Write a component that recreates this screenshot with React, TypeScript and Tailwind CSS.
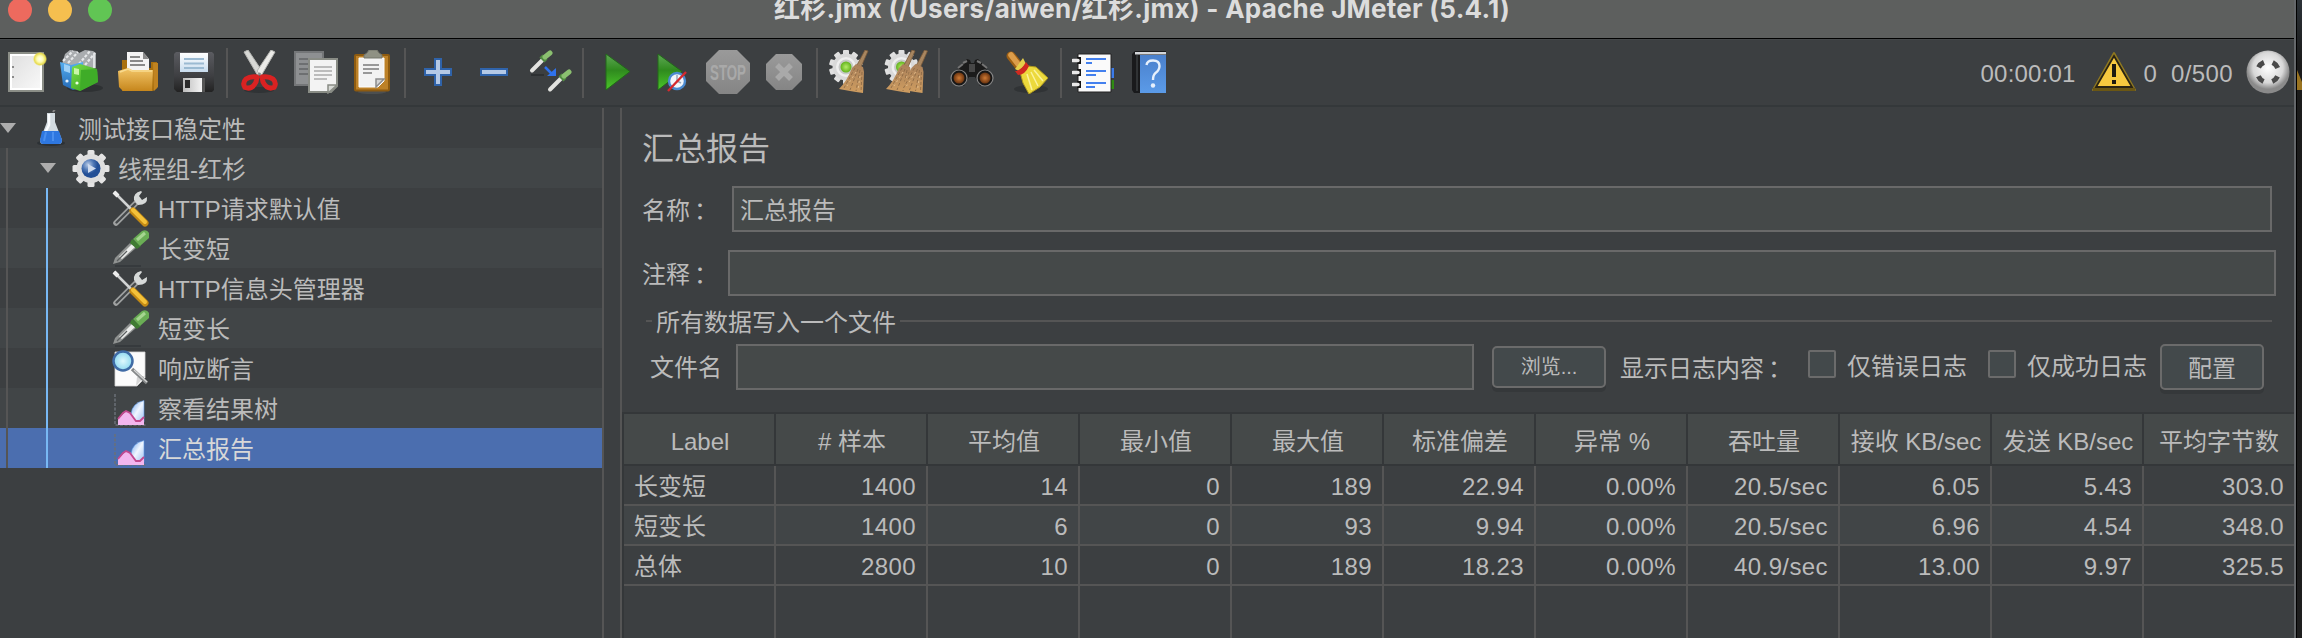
import React from 'react';

type IconProps = { children: React.ReactNode; size?: 'tool' | 'tree' };

function Icon({ children, size = 'tool' }: IconProps) {
  return size === 'tool' ? (
    <svg viewBox="0 0 44 44" className="h-11 w-11 shrink-0">{children}</svg>
  ) : (
    <svg viewBox="0 0 38 38" className="h-[38px] w-[38px] shrink-0">{children}</svg>
  );
}

function Defs() {
  return (
    <svg className="absolute h-0 w-0" aria-hidden="true">
      <defs>
        <linearGradient id="paper" x1="0" y1="0" x2="1" y2="1"><stop offset="0" stopColor="#dedede" /><stop offset="1" stopColor="#fafafa" /></linearGradient>
        <linearGradient id="blueBox" x1="0" y1="0" x2="0" y2="1"><stop offset="0" stopColor="#55aef0" /><stop offset="1" stopColor="#2569b5" /></linearGradient>
        <linearGradient id="greenBox" x1="0" y1="0" x2="1" y2="1"><stop offset="0" stopColor="#7be04a" /><stop offset="1" stopColor="#2f9a1c" /></linearGradient>
        <linearGradient id="folder" x1="0" y1="0" x2="0" y2="1"><stop offset="0" stopColor="#f3c669" /><stop offset="1" stopColor="#c6861c" /></linearGradient>
        <linearGradient id="floppy" x1="0" y1="0" x2="0" y2="1"><stop offset="0" stopColor="#5b5c61" /><stop offset="0.6" stopColor="#3e3f42" /><stop offset="1" stopColor="#222" /></linearGradient>
        <linearGradient id="label" x1="0" y1="0" x2="0" y2="1"><stop offset="0" stopColor="#ffffff" /><stop offset="1" stopColor="#c8dcee" /></linearGradient>
        <linearGradient id="metal" x1="0" y1="0" x2="1" y2="0"><stop offset="0" stopColor="#bdbdbd" /><stop offset="1" stopColor="#f3f3f3" /></linearGradient>
        <linearGradient id="play" x1="0" y1="0" x2="0" y2="1"><stop offset="0" stopColor="#5fa855" /><stop offset="0.45" stopColor="#2f8a1e" /><stop offset="1" stopColor="#4bc828" /></linearGradient>
        <linearGradient id="grey" x1="0" y1="0" x2="0" y2="1"><stop offset="0" stopColor="#9a9a9a" /><stop offset="1" stopColor="#858585" /></linearGradient>
        <linearGradient id="straw" x1="0" y1="0" x2="0" y2="1"><stop offset="0" stopColor="#a9805a" /><stop offset="1" stopColor="#cf9d60" /></linearGradient>
        <linearGradient id="book" x1="0" y1="0" x2="0" y2="1"><stop offset="0" stopColor="#4a80cc" /><stop offset="1" stopColor="#5b9be8" /></linearGradient>
        <linearGradient id="peak" x1="0" y1="0" x2="1" y2="1"><stop offset="0" stopColor="#6aa2ec" /><stop offset="0.5" stopColor="#f0f6ff" /><stop offset="1" stopColor="#9cc0f2" /></linearGradient>
        <radialGradient id="sun"><stop offset="0" stopColor="#fffff0" /><stop offset="0.45" stopColor="#fdfbb0" /><stop offset="0.8" stopColor="#e8dc50" /><stop offset="1" stopColor="#e8dc50" stopOpacity="0.15" /></radialGradient>
        <radialGradient id="lime"><stop offset="0" stopColor="#b5ec6a" /><stop offset="1" stopColor="#62b31c" /></radialGradient>
        <radialGradient id="lens"><stop offset="0" stopColor="#d07a34" /><stop offset="1" stopColor="#6a3410" /></radialGradient>
        <radialGradient id="ball" cx="0.5" cy="0.4"><stop offset="0" stopColor="#ffffff" /><stop offset="0.7" stopColor="#d8d8d8" /><stop offset="1" stopColor="#8a8a8a" /></radialGradient>
        <radialGradient id="blueBall" cx="0.35" cy="0.3"><stop offset="0" stopColor="#b9cbe6" /><stop offset="0.6" stopColor="#4d76b4" /><stop offset="1" stopColor="#234f96" /></radialGradient>
        <radialGradient id="glass"><stop offset="0" stopColor="#dff8fd" /><stop offset="1" stopColor="#8fd9f0" /></radialGradient>
      </defs>
    </svg>
  );
}

const NewDoc = () => (
  <Icon>
    <rect x="5" y="3" width="34" height="38" fill="url(#paper)" stroke="#8b8e87" strokeWidth="2" />
    <rect x="7" y="5" width="30" height="34" fill="none" stroke="#fff" strokeWidth="2" />
    <path d="M8 16h2v2h-2zM8 26h2v2h-2z" fill="#8a8a8a" />
    <circle cx="36" cy="9" r="7" fill="url(#sun)" />
  </Icon>
);

const Templates = () => (
  <Icon>
    <ellipse cx="25" cy="38" rx="18" ry="4" fill="#2e3133" />
    <path d="M2 14L5 4 10 0 17 1 19 3 25 0 33 1 36 3V18L20 22Z" fill="#a9acaf" />
    <path d="M3 11l10-10M8 13l10-11M19 14l11-13M25 15l10-12" stroke="#e6e8ea" strokeWidth="2.200" strokeDasharray="3 1.500" />
    <path d="M34 4V18" stroke="#dfe2e4" strokeWidth="2" />
    <path d="M0 12L11 15 23 12V37L13 40 3 35Z" fill="url(#blueBox)" />
    <path d="M4 14l6 2v7l-6-2z" fill="#9ed1f7" /><circle cx="7" cy="31" r="1.600" fill="#e5f3ff" />
    <path d="M12 17L20 14 37 19 38 32 20 41 11 38Z" fill="url(#greenBox)" />
    <path d="M21 20L37 19 38 32 20 41Z" fill="#3fac28" />
    <path d="M14 18l5 1v6l-5-1z" fill="#c9f5a8" /><circle cx="17" cy="33" r="1.600" fill="#eaffe0" />
  </Icon>
);

const OpenFolder = () => (
  <Icon>
    <path d="M6 10h9v8h20v-6h6v26l-4 3H6z" fill="#a9700f" />
    <path d="M37 13h5v24l-4 4z" fill="#c08321" />
    <path d="M11 2H27L33 9V23H11Z" fill="#f4f4f4" /><path d="M27 2L33 9H27Z" fill="#8b8b8b" />
    <path d="M14 7h10M14 11h13M14 15h15" stroke="#8a8a8a" strokeWidth="2" />
    <path d="M2 21L12 18 16 20H37L36 41H7L3 37Z" fill="url(#folder)" /><path d="M4 22L12 19 16 21H36" stroke="#f8db90" fill="none" strokeWidth="1.500" />
  </Icon>
);

const Save = () => (
  <Icon>
    <path d="M4 2H40L42 4V40L40 42H5L2 39V4Z" fill="url(#floppy)" />
    <rect x="8" y="3" width="28" height="19" fill="url(#label)" />
    <path d="M12 9h20M12 13.500h20M12 18h20" stroke="#9bbad2" strokeWidth="1.800" />
    <rect x="11" y="28" width="19" height="14" fill="url(#metal)" /><rect x="13" y="30" width="5" height="8" fill="#2b2b2b" /><rect x="30" y="28" width="3" height="14" fill="#555" />
  </Icon>
);

const Cut = () => (
  <Icon>
    <ellipse cx="21" cy="40" rx="15" ry="3" fill="#303335" />
    <path d="M6 2l4-2 14 21-4 5z" fill="#d7d8d5" stroke="#b3b4b1" strokeWidth="1" />
    <path d="M37 2l-4-2-14 21 4 5z" fill="#ebebe8" stroke="#b3b4b1" strokeWidth="1" />
    <path d="M19 27Q12 26 8 29Q4 33 7 37.500Q14 40 18 32ZM24 27Q31 26 35 29Q39 33 36 37.500Q29 40 25 32Z" fill="none" stroke="#d92222" strokeWidth="5" strokeLinejoin="round" />
    <circle cx="21.500" cy="24" r="1.500" fill="#888" />
  </Icon>
);

const Copy = () => (
  <Icon>
    <rect x="1" y="2" width="28" height="33" fill="#8e9092" stroke="#747678" strokeWidth="2" />
    <path d="M5 9h11M5 14h11M5 19h9M5 24h9" stroke="#6d6f71" strokeWidth="2" />
    <path d="M15 9H43V36L37 42H15Z" fill="#f3f3f3" stroke="#898c85" strokeWidth="2" />
    <path d="M20 17h18M20 21h18M20 25h18M20 29h13" stroke="#bcbcbc" strokeWidth="1.800" />
    <path d="M43 35H34V43Z" fill="#d8dad6" stroke="#898c85" strokeWidth="1.500" />
  </Icon>
);

const Paste = () => (
  <Icon>
    <ellipse cx="22" cy="42" rx="14" ry="2" fill="#4c4f50" />
    <rect x="5" y="5" width="34" height="35.500" fill="#bd8127" stroke="#8e5b10" strokeWidth="2" rx="1" />
    <path d="M9 8H34V31L28 37H9Z" fill="#f2f2f2" stroke="#fff" strokeWidth="1" />
    <path d="M13 15h16M13 19h16M13 23h9" stroke="#989898" strokeWidth="1.800" />
    <path d="M34 29H26V37Z" fill="#d5d5d5" stroke="#8c8c8c" strokeWidth="1.500" />
    <path d="M14 8V5L17 3 19 0H27L29 3 32 5V8Z" fill="#8f9184" stroke="#73756a" strokeWidth="1" />
  </Icon>
);

const Plus = () => (
  <Icon><path d="M19 9H25V19H35V25H25V35H19V25H9V19H19Z" fill="#b4c9e6" stroke="#2f63aa" strokeWidth="2" /></Icon>
);
const Minus = () => (
  <Icon><rect x="9" y="19" width="26" height="6" fill="#b4c9e6" stroke="#2f63aa" strokeWidth="2" /></Icon>
);

const Toggle = () => (
  <Icon>
    <path d="M3 25h13" stroke="#2d3032" strokeWidth="2" />
    <path d="M4 20.500L15 9.500" stroke="#e3e3e0" strokeWidth="4" strokeLinecap="round" /><path d="M14 10L17 7" stroke="#4f8a40" strokeWidth="7" /><path d="M17 7L22 3" stroke="#8bc070" strokeWidth="5" strokeLinecap="round" />
    <path d="M22 39.500L33 28.500" stroke="#e3e3e0" strokeWidth="4" strokeLinecap="round" /><path d="M33 29L36 26" stroke="#4f8a40" strokeWidth="7" /><path d="M36 26L41 22" stroke="#8bc070" strokeWidth="5" strokeLinecap="round" />
    <path d="M17 17L24 24" stroke="#2f72ec" strokeWidth="2.500" /><path d="M28 18V26H19Z" fill="#2f72ec" />
  </Icon>
);

const Play = () => (
  <Icon><path d="M12 4L36 21.500 12 40Z" fill="url(#play)" stroke="#22681a" strokeWidth="1" /></Icon>
);

const PlayNoPauses = () => (
  <Icon>
    <path d="M8 4L32 21.500 8 40Z" fill="url(#play)" stroke="#22681a" strokeWidth="1" />
    <circle cx="27" cy="31" r="8" fill="#f2f6fb" stroke="#4c8bd0" strokeWidth="2.400" />
    <path d="M27 25v6l4 2" stroke="#9aa9bb" strokeWidth="1.500" fill="none" />
    <path d="M18 41L36 22" stroke="#d52a2e" strokeWidth="2.400" />
  </Icon>
);

const Stop = () => (
  <Icon>
    <path d="M13 0H31L44 13V31L31 44H13L0 31V13Z" fill="url(#grey)" />
    <text x="22" y="29.500" textAnchor="middle" textLength="36" lengthAdjust="spacingAndGlyphs" className="fill-[#a9a9a9] font-['Liberation_Sans'] text-[22px] font-bold">STOP</text>
  </Icon>
);

const Shutdown = () => (
  <Icon>
    <path d="M14 4H30L40 14V30L30 40H14L4 30V14Z" fill="url(#grey)" />
    <path d="M15 15L29 29M29 15L15 29" stroke="#a9a9a9" strokeWidth="5.500" />
  </Icon>
);

function Cog({ cx, cy }: { cx: number; cy: number }) {
  return (
    <g transform={`translate(${cx} ${cy})`}>
      <g fill="#e0e0e0">
        {[0, 36, 72, 108, 144].map((a) => (
          <rect key={a} x="-3" y="-17" width="6" height="34" rx="1" transform={`rotate(${a})`} />
        ))}
      </g>
      <circle r="13.500" fill="#d9d9d9" /><circle r="10" fill="#efefef" /><circle r="7.500" fill="#c7c9c7" /><circle r="5.500" fill="url(#lime)" />
    </g>
  );
}

function Broom({ dx }: { dx: number }) {
  return (
    <g transform={`translate(${dx} 0)`}>
      <path d="M37 0L40 1 33 17 29 15Z" fill="#a88660" stroke="#7b5a3a" strokeWidth="0.800" />
      <path d="M28 14L35 17 36 22 35 43 28 42 22 41 11 39Q19 31 24 18Z" fill="url(#straw)" />
      <path d="M27 18L16 38M30 19L22 40M32 20L28 41M34 22L33 42" stroke="#8d6b47" strokeWidth="0.900" strokeDasharray="3 2" />
      <path d="M28 22L19 36M32 26L30 40" stroke="#e3bd8b" strokeWidth="1" strokeDasharray="2 3" />
    </g>
  );
}

const Clear = () => (<Icon><Cog cx={18} cy={17} /><Broom dx={0} /></Icon>);
const ClearAll = () => (<Icon><Cog cx={17.5} cy={17} /><Broom dx={-9} /><Broom dx={3.5} /></Icon>);

const Search = () => (
  <Icon>
    <path d="M12 14L17 9 20 10 21 13H24L25 10 28 9 33 14 43 28 38 36H30L25 27H19L14 36H6L1 28Z" fill="#1b1b1b" />
    <path d="M13 13L17 11M31 13L27 11M8 18L13 14M37 18L32 14" stroke="#747474" strokeWidth="2" />
    <circle cx="9" cy="28" r="8" fill="#161616" stroke="#858585" strokeWidth="1.200" /><circle cx="35" cy="28" r="8" fill="#161616" stroke="#858585" strokeWidth="1.200" />
    <circle cx="9" cy="28" r="5.500" fill="url(#lens)" /><circle cx="35" cy="28" r="5.500" fill="url(#lens)" />
    <rect x="19" y="14" width="6" height="8" fill="#474747" />
  </Icon>
);

const ResetSearch = () => (
  <Icon>
    <ellipse cx="25" cy="39" rx="17" ry="4" fill="#303335" />
    <path d="M5 6L13 16" stroke="#9d5f15" strokeWidth="9" strokeLinecap="round" /><path d="M5 5L12 14" stroke="#dc9c4a" strokeWidth="5.500" strokeLinecap="round" />
    <path d="M9 19L17 8 20 14 13 21Z" fill="#e4cf4a" />
    <path d="M14 22L22 16 30 17 42 28 34 37 23 44 17 33Z" fill="#ecd93c" stroke="#ad981e" strokeWidth="1" />
    <path d="M21 24l5 16M25 22l7 14M28 20l9 11" stroke="#fbf29a" strokeWidth="1.500" />
    <path d="M9 21Q15 21 20 12L23 16Q19 25 12 25Z" fill="#cf2a20" />
  </Icon>
);

const LogList = () => (
  <Icon>
    <path d="M37 18h5v10h-5z" fill="#3b7bea" /><path d="M37 30h5v9h-5z" fill="#2f8b12" />
    <path d="M6 4H39V42H6Z" fill="#fafafa" stroke="#222" strokeWidth="1" />
    <path d="M5 7h4v7H5zM5 19h4v7H5zM5 31h4v7H5z" fill="#151515" />
    <path d="M1 10.500h5M1 22.500h5M1 34.500h5" stroke="#e8e8e8" strokeWidth="3.500" strokeLinecap="round" />
    <path d="M14 9h20M14 13h6M14 21h20M14 25h10M14 33h20M14 37h9" stroke="#4380ee" strokeWidth="2" />
  </Icon>
);

const Help = () => (
  <Icon>
    <path d="M4 4L7 1H38V43H6L4 40Z" fill="#191a1c" />
    <rect x="7" y="2" width="31" height="2.500" fill="#d3d6da" />
    <rect x="12" y="5" width="26" height="38" fill="url(#book)" /><path d="M9 5V41" stroke="#494c4f" strokeWidth="1" />
    <path d="M18.500 15Q19 10.500 25 10.500Q31.500 10.500 31.500 16Q31.500 20 27.500 23Q25 25 25 30" fill="none" stroke="#e6f0fc" strokeWidth="2.400" />
    <circle cx="25" cy="35.500" r="2.200" fill="#e6f0fc" />
  </Icon>
);

const Warning = () => (
  <Icon>
    <path d="M22 3L43 40H1Z" fill="#8f7820" stroke="#8f7820" strokeWidth="2" strokeLinejoin="round" />
    <path d="M22 6L40 37H4Z" fill="#f7c93f" stroke="#2a2414" strokeWidth="1.800" />
    <path d="M20 14h4v13h-4zM20 30h4v4h-4z" fill="#1e1a10" />
    <path d="M1 39.500H43" stroke="#6b5714" strokeWidth="3" />
  </Icon>
);

const StatusBall = () => (
  <Icon>
    <circle cx="22" cy="22" r="21.500" fill="url(#ball)" />
    <circle cx="22" cy="22" r="10.500" fill="none" stroke="#4a4a4a" strokeWidth="5" strokeDasharray="7.500 9" strokeDashoffset="-4.500" />
  </Icon>
);

const Flask = () => (
  <Icon size="tree">
    <ellipse cx="19" cy="33" rx="14" ry="3" fill="#2c3135" />
    <path d="M21 2L23 -1" stroke="#858585" strokeWidth="2" />
    <path d="M15 3H23L23 12 30 30Q30 34 27 34H11Q8 34 8 30L15 12Z" fill="#d3dbe0" />
    <path d="M17 4V15L13 23" stroke="#fbfdff" strokeWidth="2.500" fill="none" />
    <path d="M10 21H27L30 30Q30 34 27 34H11Q8 34 8 30Z" fill="#2e77e0" /><path d="M14 22l-2 9M21 22v9" stroke="#4a8fee" strokeWidth="2" />
  </Icon>
);

const ThreadGroup = () => (
  <Icon size="tree">
    <g transform="translate(19 18.500)">
      {[0, 45, 90, 135].map((a) => (
        <rect key={a} x="-3.500" y="-18.500" width="7" height="37" rx="1.500" fill="#e4e4e4" transform={`rotate(${a})`} />
      ))}
      <circle r="14.500" fill="#dedede" /><circle r="9.500" fill="url(#blueBall)" /><path d="M-3 -4.500L5 0L-3 4.500Z" fill="#cfdbee" />
    </g>
  </Icon>
);

const Tools = () => (
  <Icon size="tree">
    <path d="M4 33L24 13" stroke="#a0a2a2" strokeWidth="5.500" strokeLinecap="round" /><path d="M4.500 32.500L23 14" stroke="#46494b" strokeWidth="2.400" strokeLinecap="round" />
    <path d="M22 10Q21 3 29 1L30 2 27 6 30 10 35 7Q36 15 26 15Z" fill="#d7dad9" />
    <path d="M2 2L19 19" stroke="#d2d4d4" strokeWidth="2.500" /><path d="M2 2L6 6" stroke="#ededed" strokeWidth="4" />
    <path d="M21 21L33 33" stroke="#c48a14" strokeWidth="7" strokeLinecap="round" /><path d="M21 20L33 32" stroke="#f4c23a" strokeWidth="4" strokeLinecap="round" />
  </Icon>
);

const Dropper = () => (
  <Icon size="tree">
    <path d="M3 36h26" stroke="#33373a" strokeWidth="1.500" />
    <path d="M1 34L3 28 18 13 24 18 8 32Z" fill="#8f9291" /><path d="M7 27L20 14 23 17 10 29Z" fill="#ecedec" /><path d="M5 31L15 21" stroke="#5b5e5f" strokeWidth="1.300" />
    <path d="M20 9L29 16 25 19 18 13Z" fill="#3f7c33" />
    <path d="M21 9L30 1Q35 -1 37 3V8L28 16Z" fill="#6aae55" /><path d="M25 10L33 3" stroke="#a5d590" strokeWidth="3" />
  </Icon>
);

const Assertion = () => (
  <Icon size="tree">
    <path d="M3 2H33V28L25 36H3Z" fill="#fbfbfb" stroke="#d5d5d5" strokeWidth="0.800" /><path d="M33 26L24 36L25 27Z" fill="#d6d6d6" />
    <path d="M20 19L35 33" stroke="#858889" strokeWidth="3.500" /><path d="M22 20L35 32" stroke="#d5d5d5" strokeWidth="1.200" />
    <circle cx="11" cy="11" r="9.500" fill="url(#glass)" stroke="#3f6ba5" strokeWidth="2.500" />
  </Icon>
);

const Chart = () => (
  <Icon size="tree">
    <path d="M3 4V35H34" fill="none" stroke="#6b7078" strokeWidth="1.500" strokeDasharray="3 1.500" />
    <path d="M19 24Q20 13 32 10.500V32H22Z" fill="url(#peak)" stroke="#5b93e0" strokeWidth="0.600" />
    <path d="M6 35V29L13 22 18 22 24 31 32 28V35Z" fill="#f2b6ee" /><path d="M6 29L11 23 14 21 18 23 24 31 28 31 32 27" fill="none" stroke="#c2498f" strokeWidth="1.800" />
  </Icon>
);

const toolbarGroups: React.ComponentType[][] = [
  [NewDoc, Templates, OpenFolder, Save],
  [Cut, Copy, Paste],
  [Plus, Minus, Toggle],
  [Play, PlayNoPauses, Stop, Shutdown],
  [Clear, ClearAll],
  [Search, ResetSearch],
  [LogList, Help],
];

function Toolbar() {
  return (
    <div className="flex h-[68px] shrink-0 items-start border-b-2 border-[#34383a] pl-1 pr-1 pt-[11px]">
      {toolbarGroups.map((group, i) => (
        <React.Fragment key={i}>
          {i > 0 && <div className="mx-[10px] -mt-[2px] h-[50px] w-[2px] bg-[#555555]" />}
          <div className="flex gap-3">
            {group.map((Tool, j) => <Tool key={j} />)}
          </div>
        </React.Fragment>
      ))}
      <div className="ml-auto flex items-center">
        <span className="mr-4 pt-[3px] tracking-[0.2px]">00:00:01</span>
        <Warning />
        <span className="ml-2 pt-[3px]">0</span>
        <span className="ml-[14px] mr-[13px] pt-[3px] tracking-[0.4px]">0/500</span>
        <StatusBall />
      </div>
    </div>
  );
}

type Node = { label: string; icon: React.ComponentType; level: 0 | 1 | 2; selected?: boolean };

const nodes: Node[] = [
  { label: '测试接口稳定性', icon: Flask, level: 0 },
  { label: '线程组-红杉', icon: ThreadGroup, level: 1 },
  { label: 'HTTP请求默认值', icon: Tools, level: 2 },
  { label: '长变短', icon: Dropper, level: 2 },
  { label: 'HTTP信息头管理器', icon: Tools, level: 2 },
  { label: '短变长', icon: Dropper, level: 2 },
  { label: '响应断言', icon: Assertion, level: 2 },
  { label: '察看结果树', icon: Chart, level: 2 },
  { label: '汇总报告', icon: Chart, level: 2, selected: true },
];

const Arrow = () => (
  <svg viewBox="0 0 16 10" className="h-[10px] w-4 shrink-0"><path d="M0 0H16L8 10Z" fill="#adadad" /></svg>
);

function Tree() {
  return (
    <div className="w-[604px] shrink-0 border-r-2 border-[#555555]">
      {nodes.map((n, i) => {
        const bg = n.selected ? 'bg-[#4b6eaf] text-[#d8d8d8]' : i % 2 ? 'bg-[#414547]' : '';
        const Glyph = n.icon;
        return (
          <div key={i} className={`flex h-10 items-center ${bg}`}>
            {n.level === 0 && <><Arrow /><div className="w-4" /></>}
            {n.level === 1 && <><div className="ml-[6px] h-10 w-[2px] bg-[#555555]" /><div className="w-8" /><Arrow /><div className="w-4" /></>}
            {n.level === 2 && <><div className="ml-[6px] h-10 w-[2px] bg-[#555555]" /><div className="ml-[38px] mr-16 h-10 w-[2px] bg-[#78b8f4]" /></>}
            <div className="pt-[2px]"><Glyph /></div>
            <span className="ml-2 pt-1">{n.label}</span>
          </div>
        );
      })}
    </div>
  );
}

const Colon = () => <span className="ml-[4px] mr-[-4px]">：</span>;

const columns = ['Label', '# 样本', '平均值', '最小值', '最大值', '标准偏差', '异常 %', '吞吐量', '接收 KB/sec', '发送 KB/sec', '平均字节数'];
const rows = [
  ['长变短', '1400', '14', '0', '189', '22.94', '0.00%', '20.5/sec', '6.05', '5.43', '303.0'],
  ['短变长', '1400', '6', '0', '93', '9.94', '0.00%', '20.5/sec', '6.96', '4.54', '348.0'],
  ['总体', '2800', '10', '0', '189', '18.23', '0.00%', '40.9/sec', '13.00', '9.97', '325.5'],
  ['', '', '', '', '', '', '', '', '', '', ''],
];

function ReportTable() {
  return (
    <div className="flex min-h-0 flex-1 flex-col overflow-hidden border-l-2 border-t-2 border-[#343739]">
      <div className="grid h-[52px] shrink-0 grid-cols-[repeat(10,152px)_150px] border-b-2 border-[#343739] bg-[#454949]">
        {columns.map((c, i) => (
          <div key={c} className={`flex items-center justify-center whitespace-nowrap pt-[5px] ${i < 10 ? 'border-r-2 border-[#343739] pl-[2px]' : ''}`}>{c}</div>
        ))}
      </div>
      {rows.map((r, y) => (
        <div key={y} className={`grid shrink-0 grid-cols-[repeat(10,152px)_150px] border-[#555555] ${y === 3 ? 'h-[52px]' : 'h-10 border-b-2'} ${y === 1 ? 'bg-[#414547]' : ''}`}>
          {r.map((v, x) => (
            <div key={x} className={`flex items-center whitespace-nowrap pr-[10px] pt-[3px] ${x === 0 ? 'pl-[10px]' : 'justify-end tracking-[0.4px]'} ${x < 10 ? 'border-r-2 border-[#555555]' : ''}`}>{v}</div>
          ))}
        </div>
      ))}
    </div>
  );
}

function Report() {
  const field = 'h-[46px] border-2 border-[#696969] bg-[#454949]';
  const button = 'flex items-center justify-center rounded-[5px] border-2 border-[#6b6b6b] bg-[#43494b] shadow-[0_4px_0_#35383a]';
  const checkbox = 'mt-[6px] h-7 w-7 shrink-0 rounded-[2px] border-2 border-[#6b6b6b] bg-[#43494b]';
  return (
    <div className="ml-4 flex min-w-0 flex-1 flex-col border-l-2 border-[#555555]">
      <div className="flex h-[78px] items-center pl-5 pt-1 text-[32px]">汇总报告</div>
      <div className="flex h-[46px] items-center pr-[22px]">
        <span className="w-[110px] shrink-0 whitespace-nowrap pl-5 pt-[3px]">名称<Colon /></span>
        <div className={`${field} flex flex-1 items-center pl-[6px] pt-[3px]`}>汇总报告</div>
      </div>
      <div className="mt-[18px] flex h-[46px] items-center pr-[18px]">
        <span className="w-[106px] shrink-0 whitespace-nowrap pl-5 pt-[3px]">注释<Colon /></span>
        <div className={`${field} flex-1`} />
      </div>
      <div className="flex h-12 items-center pl-6 pr-[22px] pt-[2px]">
        <div className="h-[2px] w-[6px] bg-[#555555]" />
        <span className="mx-1 pt-[3px]">所有数据写入一个文件</span>
        <div className="h-[2px] flex-1 bg-[#555555]" />
      </div>
      <div className="flex h-[68px] shrink-0 items-start whitespace-nowrap leading-[46px]">
        <span className="w-[114px] shrink-0 pl-7 pt-[1px]">文件名</span>
        <div className={`${field} w-[738px] shrink-0`} />
        <div className={`${button} ml-[18px] mt-[2px] h-[42px] w-[114px] shrink-0 text-[20px] leading-[38px]`}>浏览...</div>
        <span className="ml-[14px] w-[188px] shrink-0 pt-[2px]">显示日志内容<Colon /></span>
        <div className={checkbox} />
        <span className="ml-[11px] w-[141px] shrink-0">仅错误日志</span>
        <div className={checkbox} />
        <span className="ml-[11px] w-[133px] shrink-0">仅成功日志</span>
        <div className={`${button} h-[46px] w-[104px] shrink-0 pt-[3px]`}>配置</div>
      </div>
      <ReportTable />
    </div>
  );
}

export default function App() {
  return (
    <div className="flex h-[638px] w-[2302px] overflow-hidden bg-[#1b1b1b] font-['Liberation_Sans','Noto_Sans_CJK_SC',sans-serif] text-[24px] leading-[32px] text-[#bbbbbb]">
      <Defs />
      <div className="flex w-[2296px] shrink-0 flex-col border-r-2 border-[#64676a] bg-[#3c3f41]">
        <div className="flex h-[38px] shrink-0 items-start overflow-hidden bg-[#5d5f5e]">
          <div className="-mt-[2px] flex gap-4 pl-2">
            <div className="h-6 w-6 rounded-full bg-[#ed6a5e]" />
            <div className="h-6 w-6 rounded-full bg-[#f5bf4f]" />
            <div className="h-6 w-6 rounded-full bg-[#61c554]" />
          </div>
          <div className="ml-[662px] whitespace-nowrap font-['Inter','Noto_Sans_CJK_SC',sans-serif] text-[26px] font-bold leading-[18px] tracking-[0.25px] text-[#dcdcdc]">
            红杉.jmx (/Users/aiwen/红杉.jmx) - Apache JMeter (5.4.1)
          </div>
        </div>
        <div className="h-px shrink-0 bg-black" />
        <div className="h-px shrink-0 bg-[#45484a]" />
        <div className="-mt-px flex min-h-0 flex-1 flex-col">
          <Toolbar />
          <div className="mt-px flex min-h-0 flex-1">
            <Tree />
            <Report />
          </div>
        </div>
      </div>
      <div className="w-[6px] border-l border-black bg-linear-to-b from-[#2c3238] from-0% via-[#1b1b1b] via-10% to-[#1e1e1e]">
        <svg viewBox="0 0 5 20" className="mt-[70px] h-5 w-[5px]"><path d="M0 0L5 12V20H0Z" fill="#9a7420" /></svg>
      </div>
    </div>
  );
}
